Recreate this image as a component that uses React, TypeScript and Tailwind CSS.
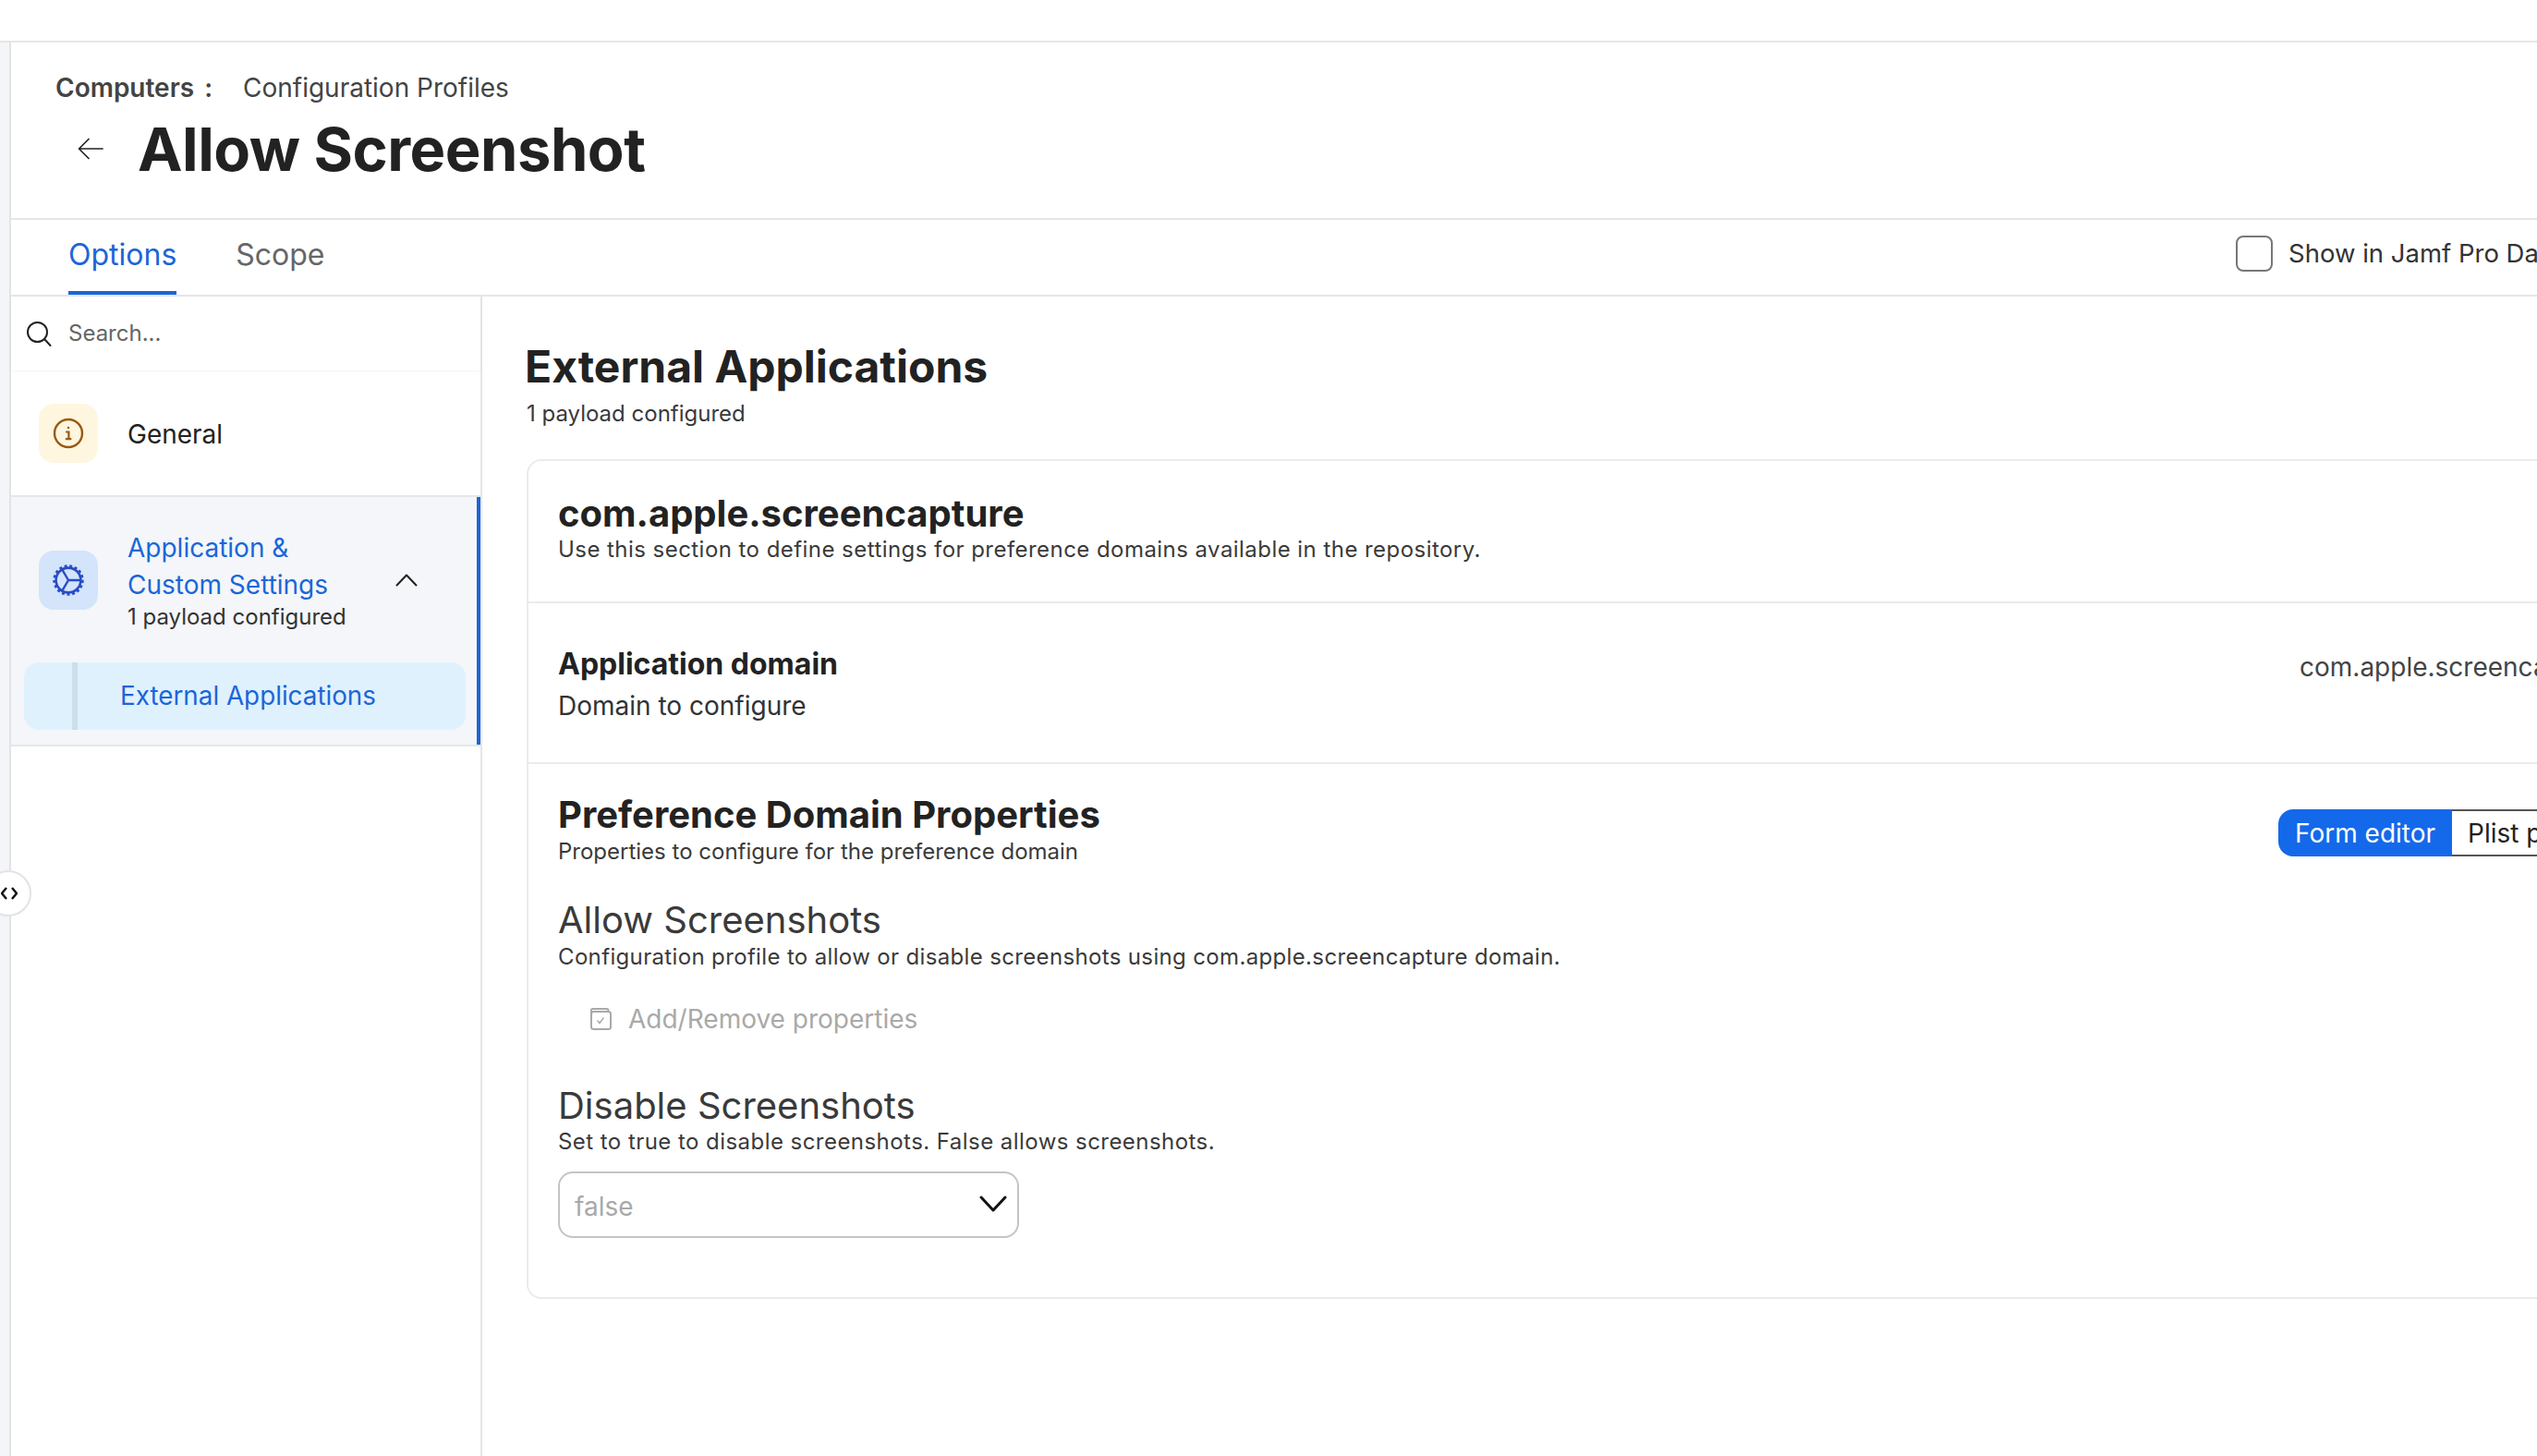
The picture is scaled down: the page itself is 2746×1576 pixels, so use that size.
const InfoIcon = () => (
  <svg width="34" height="34" viewBox="0 0 34 34" fill="none" stroke="#9a5a10" strokeLinecap="round">
    <circle cx="17" cy="17" r="15" strokeWidth="2.4" />
    <circle cx="17" cy="11" r="1.2" fill="#9a5a10" stroke="none" />
    <path d="M15 15.5h2.4v7.5M14.8 23.2h4.6" strokeWidth="2.2" />
  </svg>
);

const GearIcon = () => (
  <svg width="34" height="34" viewBox="0 0 34 34" fill="none" stroke="#2a4cc4">
    <circle cx="17" cy="17" r="13.4" strokeWidth="2.6" />
    <circle cx="17" cy="17" r="15.4" strokeWidth="2.6" strokeDasharray="3 2.64" />
    <path d="M17 17 L30 17 M17 17 L10.5 5.8 M17 17 L10.5 28.2" strokeWidth="2.4" />
  </svg>
);

const SearchIcon = () => (
  <svg width="28" height="28" viewBox="0 0 28 28" fill="none" stroke="#222" strokeWidth="2" strokeLinecap="round">
    <circle cx="12.5" cy="12.5" r="10.5" />
    <path d="M20 20l6.5 7" />
  </svg>
);

const BackArrow = () => (
  <svg width="28" height="24" viewBox="0 0 28 24" fill="none" stroke="#222" strokeWidth="1.7" strokeLinecap="round" strokeLinejoin="round">
    <path d="M27 12H2M12 1.5 1.5 12 12 22.5" />
  </svg>
);

const PropsIcon = () => (
  <svg width="24" height="24" viewBox="0 0 24 24" fill="none" stroke="#a9a9a9" strokeWidth="2">
    <path d="M2 6V2.500C2 1.700 2.700 1 3.500 1h15c1 0 2 1 2 2" />
    <rect x="2" y="4" width="21" height="19" rx="2.5" />
    <path d="M8.500 13.500l2.500 3 4.500-6" strokeWidth="1.4" />
  </svg>
);

export default function App() {
  return (
    <div className="w-[2746px] h-[1576px] overflow-hidden bg-white relative font-['Inter',sans-serif] text-[#222]">
      {/* top bar */}
      <div className="h-[46px] border-b-2 border-[#e6e6e6]" />

      <div className="flex h-[1530px]">
        <div className="w-[12px] shrink-0 bg-[#f3f5f8] border-r-2 border-[#e3e3e3]" />

        <div className="flex-1 flex flex-col min-w-0">
          {/* page header */}
          <div className="h-[192px] shrink-0 border-b-2 border-[#e6e6e6] pl-[48px]">
            <div className="flex items-center h-[36px] mt-[31px] text-[28px] text-[#444] whitespace-nowrap">
              <span className="font-semibold w-[203px]">Computers<span className="ml-[11px]">:</span></span>
              <span>Configuration Profiles</span>
            </div>
            <div className="flex items-center mt-[10px] h-[76px]">
              <div className="ml-[24px] w-[65px] shrink-0">
                <BackArrow />
              </div>
              <h1 className="text-[65px] leading-[76px] font-bold tracking-[-0.5px] whitespace-nowrap pt-[2px]">Allow Screenshot</h1>
            </div>
          </div>

          {/* tabs */}
          <div className="flex w-[2988px] h-[83px] shrink-0 border-b-2 border-[#e6e6e6]">
            <div className="flex-1 flex pl-[62px] gap-[64px] text-[32px]">
              <div className="h-[81px] flex items-center border-b-4 border-[#1a66d9] text-[#1a66d9] pb-[2px]">Options</div>
              <div className="h-[81px] flex items-center text-[#666] pb-[6px]">Scope</div>
            </div>
            <div className="w-[580px] flex items-center gap-[17px] pb-[8px] text-[27.5px] text-[#333] whitespace-nowrap">
              <div className="w-[40px] h-[39px] border-2 border-[#777] rounded-[8px]" />
              <span>Show in Jamf Pro Dashboard</span>
            </div>
          </div>

          <div className="flex flex-1 min-h-0">
            {/* left nav */}
            <div className="w-[510px] shrink-0 border-r-2 border-[#e6e6e6]">
              <div className="h-[80px] flex items-center pl-[16px] gap-[18px] shadow-[0_1px_3px_rgba(0,0,0,0.05)] text-[24px] text-[#666]">
                <SearchIcon />
                <span>Search...</span>
              </div>
              <div className="h-[137px] flex items-center border-b-2 border-[#e6e6e6] pl-[30px]">
                <div className="w-[64px] h-[64px] rounded-[16px] bg-[#fff6e0] flex items-center justify-center">
                  <InfoIcon />
                </div>
                <span className="ml-[32px] text-[28px] pt-[2px]">General</span>
              </div>
              <div className="bg-[#f4f6f9] border-b-2 border-[#e6e6e6]">
                <div className="border-r-4 border-[#1a66d9] pb-[16px]">
                  <div className="flex items-center pl-[30px] pt-[35px]">
                    <div className="w-[64px] h-[64px] rounded-[16px] bg-[#d3e4fb] flex items-center justify-center">
                      <GearIcon />
                    </div>
                    <div className="ml-[32px] w-[290px]">
                      <div className="text-[28px] leading-[40px] text-[#1a66d9]">Application &amp;<br />Custom Settings</div>
                      <div className="text-[24px] leading-[30px] text-[#333]">1 payload configured</div>
                    </div>
                    <svg className="shrink-0" width="24" height="14" viewBox="0 0 24 14" fill="none" stroke="#222" strokeWidth="2" strokeLinecap="round" strokeLinejoin="round">
                      <path d="M1.500 12.500 12 1.500l10.500 11" />
                    </svg>
                  </div>
                  <div className="mt-[34px] ml-[14px] mr-[12px] h-[73px] rounded-[16px] bg-[#e0f1fe] flex items-stretch">
                    <div className="ml-[52px] w-[6px] bg-[#ccdfeb]" />
                    <div className="ml-[46px] flex items-center text-[27.8px] text-[#1a66d9] whitespace-nowrap">External Applications</div>
                  </div>
                </div>
              </div>
            </div>

            {/* content */}
            <div className="flex-1 pl-[46px] pt-[46px] min-w-0">
              <h2 className="text-[48px] leading-[60px] font-bold whitespace-nowrap">External Applications</h2>
              <div className="mt-[5px] ml-[2px] text-[24px] leading-[32px] text-[#3a3a3a]">1 payload configured</div>

              <div className="mt-[33px] ml-[2px] w-[2420px] border-2 border-[#ebebeb] rounded-[16px] whitespace-nowrap">
                <div className="h-[154px] border-b-2 border-[#ebebeb] pl-[32px] pt-[32px]">
                  <div className="text-[40px] leading-[50px] font-bold">com.apple.screencapture</div>
                  <div className="text-[24px] leading-[30px] tracking-[0.45px] text-[#3a3a3a] -mt-[1px]">Use this section to define settings for preference domains available in the repository.</div>
                </div>

                <div className="h-[174px] border-b-2 border-[#ebebeb] pl-[32px] pt-[44px] flex">
                  <div className="flex-1">
                    <div className="text-[32px] leading-[44px] font-bold">Application domain</div>
                    <div className="text-[28px] leading-[44px] mt-[1px] text-[#333]">Domain to configure</div>
                  </div>
                  <div className="w-[499px] text-[28px] leading-[44px] text-[#444] mt-[3px]">com.apple.screencapture</div>
                </div>

                <div className="pl-[32px] pt-[30px] pb-[64px]">
                  <div className="flex">
                    <div className="flex-1">
                      <div className="text-[40px] leading-[50px] font-bold">Preference Domain Properties</div>
                      <div className="text-[24px] leading-[30px] text-[#3a3a3a]">Properties to configure for the preference domain</div>
                    </div>
                    <div className="w-[522px] mt-[19px]">
                      <div className="flex h-[51px] text-[28px]">
                        <div className="w-[188px] bg-[#1469ea] text-white rounded-l-[16px] flex items-center justify-center">Form editor</div>
                        <div className="w-[200px] border-2 border-l-0 border-[#555] flex items-center pl-[17px] text-[#222]">Plist preview</div>
                      </div>
                    </div>
                  </div>

                  <div className="mt-[34px] text-[40px] leading-[50px] text-[#3a3a3a]">Allow Screenshots</div>
                  <div className="text-[24px] leading-[30px] tracking-[0.35px] text-[#3a3a3a]">Configuration profile to allow or disable screenshots using com.apple.screencapture domain.</div>
                  <div className="mt-[34px] ml-[34px] h-[36px] flex items-center gap-[18px] text-[28px] text-[#a9a9a9]">
                    <PropsIcon />
                    <span>Add/Remove properties</span>
                  </div>

                  <div className="mt-[51px] text-[40px] leading-[50px] text-[#3a3a3a]">Disable Screenshots</div>
                  <div className="-mt-[1px] text-[24px] leading-[30px] tracking-[0.45px] text-[#3a3a3a]">Set to true to disable screenshots. False allows screenshots.</div>
                  <div className="mt-[17px] w-[499px] h-[72px] border-2 border-[#c4c4c4] rounded-[16px] flex items-center justify-between pl-[16px] pr-[11px]">
                    <span className="text-[28px] text-[#a9a9a9] pt-[3px]">false</span>
                    <svg width="30" height="18" viewBox="0 0 30 18" fill="none" stroke="#111" strokeWidth="3" strokeLinecap="round" strokeLinejoin="round" className="mb-[2px]">
                      <path d="M2 2l13 14L28 2" />
                    </svg>
                  </div>
                </div>
              </div>
            </div>
          </div>
        </div>
      </div>

      {/* collapse handle */}
      <div className="absolute left-[-16px] top-[942px] w-[50px] h-[50px] rounded-full bg-white border-2 border-[#e3e3e3] flex items-center justify-end pr-[13px]">
        <svg width="18" height="14" viewBox="0 0 18 14" fill="none" stroke="#111" strokeWidth="2.4">
          <path d="M6 1 1 7l5 6M12 1l5 6-5 6" />
        </svg>
      </div>
    </div>
  );
}
